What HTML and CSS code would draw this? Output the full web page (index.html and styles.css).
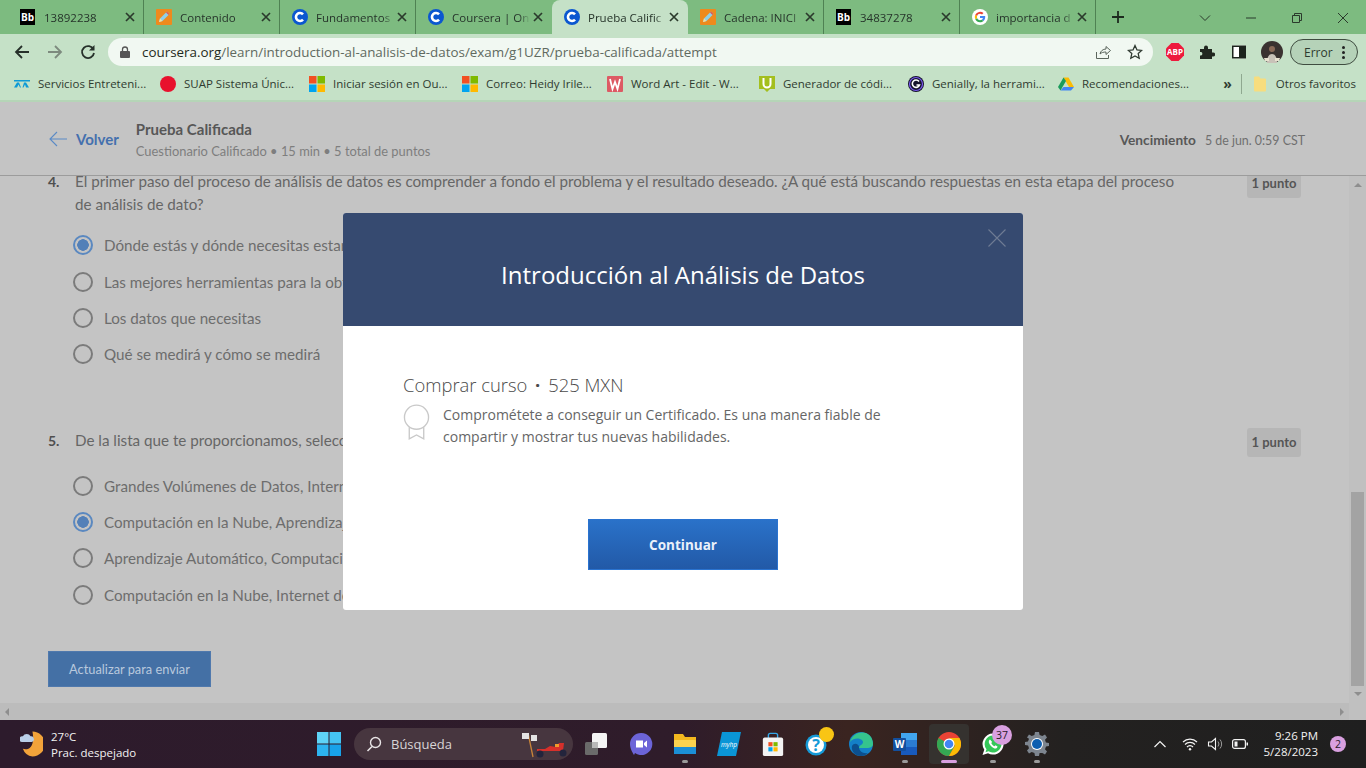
FILE: index.html
```html
<!DOCTYPE html>
<html lang="es">
<head>
  <meta charset="UTF-8" />
  <title>Prueba Calificada | Coursera</title>
  <link rel="stylesheet" href="styles.css">
</head>
<body>

  <svg class="sprite" width="0" height="0">
    <symbol id="i-coursera" viewBox="0 0 16 16">
      <circle cx="8" cy="8" r="8" fill="#0b57d0"/>
      <path d="M11 5.400A4 4 0 1 0 11 10.600" fill="none" stroke="#fff" stroke-width="2.600"/>
    </symbol>
    <symbol id="i-pencil" viewBox="0 0 16 16">
      <rect width="16" height="16" rx="1" fill="#ee8a1d"/>
      <path d="M3 13l1-3.500 7-7 2.500 2.500-7 7z" fill="#8fd0e8"/>
      <path d="M3 13l1-3.500 2.500 2.500z" fill="#f7e0a0"/>
      <path d="M10 3.500l2.500 2.500 1-1L11 2.500z" fill="#e2574c"/>
    </symbol>
    <symbol id="i-ms" viewBox="0 0 16 16">
      <rect width="7.500" height="7.500" fill="#f25022"/>
      <rect x="8.500" width="7.500" height="7.500" fill="#7fba00"/>
      <rect y="8.500" width="7.500" height="7.500" fill="#00a4ef"/>
      <rect x="8.500" y="8.500" width="7.500" height="7.500" fill="#ffb900"/>
    </symbol>
    <symbol id="i-close" viewBox="0 0 10 10">
      <path d="M1 1l8 8M9 1l-8 8" fill="none" stroke="#2b3a2c" stroke-width="1.700"/>
    </symbol>
    <symbol id="i-google" viewBox="0 0 16 16">
      <circle cx="8" cy="8" r="8" fill="#fff"/>
      <path d="M13.200 8.100c0-.4 0-.8-.1-1.100H8v2.100h2.900a2.500 2.500 0 0 1-1.100 1.600l1.700 1.300c1-.9 1.700-2.300 1.700-3.900z" fill="#4285f4"/>
      <path d="M8 13.300c1.400 0 2.600-.5 3.500-1.300l-1.700-1.300c-.5.300-1.100.5-1.800.5-1.400 0-2.500-.9-2.900-2.200L3.300 10.300A5.300 5.300 0 0 0 8 13.300z" fill="#34a853"/>
      <path d="M5.100 9a3.200 3.200 0 0 1 0-2L3.300 5.700a5.300 5.300 0 0 0 0 4.600z" fill="#fbbc05"/>
      <path d="M8 4.800c.8 0 1.500.3 2 .8l1.500-1.500A5.300 5.300 0 0 0 3.300 5.700L5.100 7C5.500 5.700 6.600 4.800 8 4.800z" fill="#ea4335"/>
    </symbol>
  </svg>

  <!-- tab strip -->
  <div class="tabstrip">
    <div class="tab"><span class="fav-bb">Bb</span><span class="tab-title">13892238</span><svg class="tab-x"><use href="#i-close"/></svg></div>
    <div class="tab"><svg class="fav"><use href="#i-pencil"/></svg><span class="tab-title">Contenido</span><svg class="tab-x"><use href="#i-close"/></svg></div>
    <div class="tab"><svg class="fav"><use href="#i-coursera"/></svg><span class="tab-title">Fundamentos</span><svg class="tab-x"><use href="#i-close"/></svg></div>
    <div class="tab no-sep"><svg class="fav"><use href="#i-coursera"/></svg><span class="tab-title">Coursera | On</span><svg class="tab-x"><use href="#i-close"/></svg></div>
    <div class="tab active no-sep"><svg class="fav"><use href="#i-coursera"/></svg><span class="tab-title">Prueba Calific</span><svg class="tab-x"><use href="#i-close"/></svg></div>
    <div class="tab"><svg class="fav"><use href="#i-pencil"/></svg><span class="tab-title">Cadena: INICI</span><svg class="tab-x"><use href="#i-close"/></svg></div>
    <div class="tab"><span class="fav-bb">Bb</span><span class="tab-title">34837278</span><svg class="tab-x"><use href="#i-close"/></svg></div>
    <div class="tab"><svg class="fav"><use href="#i-google"/></svg><span class="tab-title">importancia d</span><svg class="tab-x"><use href="#i-close"/></svg></div>
    <svg class="new-tab" viewBox="0 0 14 14"><path d="M7 1v12M1 7h12" stroke="#1d2a1e" stroke-width="1.800"/></svg>
    <div class="win-controls">
      <svg viewBox="0 0 12 12"><path d="M1 3.500l5 5 5-5" fill="none" stroke="#2b3a2c"/></svg>
      <svg viewBox="0 0 12 12"><path d="M1 6h10" stroke="#2b3a2c"/></svg>
      <svg viewBox="0 0 12 12"><path d="M1.500 3.500h7v7h-7zM3.500 3.500v-2h7v7h-2" fill="none" stroke="#2b3a2c"/></svg>
      <svg viewBox="0 0 12 12"><path d="M1 1l10 10M11 1L1 11" stroke="#2b3a2c"/></svg>
    </div>
  </div>

  <!-- address bar -->
  <div class="toolbar">
    <svg class="nav-btn" viewBox="0 0 16 16"><path d="M15 8H2M8 2L2 8l6 6" fill="none" stroke="#26302a" stroke-width="1.800"/></svg>
    <svg class="nav-btn" viewBox="0 0 16 16"><path d="M1 8h13M8 2l6 6-6 6" fill="none" stroke="#7d8a7e" stroke-width="1.800"/></svg>
    <svg class="nav-btn" viewBox="0 0 16 16"><path d="M13.500 5.500A6 6 0 1 0 14 9" fill="none" stroke="#26302a" stroke-width="1.800"/><path d="M14.500 1v5.500H9z" fill="#26302a"/></svg>
    <div class="omnibox">
      <svg class="lock" viewBox="0 0 10 12"><path d="M2.500 5V3.500a2.500 2.500 0 0 1 5 0V5" fill="none" stroke="#555" stroke-width="1.300"/><rect y="5" width="10" height="7" rx="1" fill="#555"/></svg>
      <span class="url"><b>coursera.org</b>/learn/introduction-al-analisis-de-datos/exam/g1UZR/prueba-calificada/attempt</span>
      <svg class="omni-icon" viewBox="0 0 16 16"><path d="M1.500 8v6.500h12V11M5 10c.5-3 3-5 6-5V2.500L15.500 6.500 11 10.500V8c-2.500 0-4.500.5-6 2z" fill="none" stroke="#5b655c"/></svg>
      <svg class="omni-icon" viewBox="0 0 16 16"><path d="M8 1.500l2 4.400 4.700.5-3.500 3.200 1 4.700L8 11.900 3.800 14.300l1-4.700L1.300 6.400 6 5.900z" fill="none" stroke="#2f3a31" stroke-width="1.300"/></svg>
    </div>
    <div class="ext-group">
      <span class="abp">ABP</span>
      <svg class="ext" viewBox="0 0 16 16"><path d="M1 5h4V3.500a2 2 0 0 1 4 0V5h4v3.500h1.200a2 2 0 0 1 0 4H13V15H1v-3.500h1a1.800 1.800 0 0 0 0-3.500H1z" fill="#20271f"/></svg>
      <svg class="ext" viewBox="0 0 16 16"><path d="M1 1.500h14v13H1z" fill="#fff"/><path d="M1 1.500h14v13H1zM2.500 3v10H8V3z" fill="#1c241d" fill-rule="evenodd"/></svg>
      <svg class="avatar" viewBox="0 0 22 22"><circle cx="11" cy="11" r="11" fill="#3a3230"/><path d="M6 22c0-6 2-9 5-9s5 3 5 9z" fill="#c9c2b8"/><circle cx="11" cy="8" r="3" fill="#8a6a58"/><path d="M3 17h5v3H4zM14 17h5l-1 3h-4z" fill="#e8e2d0"/></svg>
      <div class="error-chip">Error<span class="dots"><i></i><i></i><i></i></span></div>
    </div>
  </div>

  <!-- bookmarks -->
  <div class="bookmarks">
    <div class="bm"><svg class="fav" viewBox="0 0 16 16"><path d="M0 4h16v1.500H0zM3 6.500l-3 5h3l1.500-3 1.500 3h1L5 6.500zM10 6.500l2 0 3 5h-3L11 8.500 9.500 11.500h-1z" fill="#0d9ad6"/></svg><span>Servicios Entreteni...</span></div>
    <div class="bm"><svg class="fav" viewBox="0 0 16 16"><circle cx="8" cy="8" r="8" fill="#e8112d"/></svg><span>SUAP Sistema Únic...</span></div>
    <div class="bm"><svg class="fav"><use href="#i-ms"/></svg><span>Iniciar sesión en Ou...</span></div>
    <div class="bm"><svg class="fav"><use href="#i-ms"/></svg><span>Correo: Heidy Irile...</span></div>
    <div class="bm"><svg class="fav" viewBox="0 0 16 16"><rect width="16" height="16" rx="1" fill="#dd5a64"/><path d="M3 3l2.500 10L8 6l2.500 7L13 3" fill="none" stroke="#fff" stroke-width="1.800"/></svg><span>Word Art - Edit - W...</span></div>
    <div class="bm"><svg class="fav" viewBox="0 0 16 16"><path d="M0 0h16v13h-5l-3 3-3-3H0z" fill="#a4bf1e"/><path d="M4.500 2v6a3.500 3.500 0 0 0 7 0V2" fill="none" stroke="#fff" stroke-width="2"/></svg><span>Generador de códi...</span></div>
    <div class="bm"><svg class="fav" viewBox="0 0 16 16"><circle cx="8" cy="8" r="8" fill="#14122b"/><circle cx="8" cy="8" r="6.500" fill="none" stroke="#7a5af0" stroke-width="1.200"/><path d="M11 5.500A3.700 3.700 0 1 0 11.500 9H8.500" fill="none" stroke="#fff" stroke-width="1.600"/></svg><span>Genially, la herrami...</span></div>
    <div class="bm"><svg class="fav" viewBox="0 0 16 16"><path d="M5.500 1.500h5L16 11h-5z" fill="#fbbc04"/><path d="M5.500 1.500L0 11l2.500 3.500L8 5z" fill="#1a9c5b"/><path d="M2.500 14.500h10.500L16 11H5.500z" fill="#4285f4"/></svg><span>Recomendaciones...</span></div>
    <div class="bm-right">
      <span class="more">»</span>
      <span class="bm-sep"></span>
      <svg class="folder" viewBox="0 0 12 16"><path d="M0 1.500A1 1 0 0 1 1 .5h4l1.500 2H11a1 1 0 0 1 1 1V14.500a1 1 0 0 1-1 1H1a1 1 0 0 1-1-1z" fill="#f7dd7e"/></svg>
      <span>Otros favoritos</span>
    </div>
  </div>

  <!-- coursera page, already dimmed by the modal backdrop -->
  <div class="page">
    <div class="course-header">
      <div class="back">
        <svg class="back-arrow" viewBox="0 0 18 16"><path d="M18 8H1M8 1L1 8l7 7" fill="none" stroke="#5a8ac6" stroke-width="1.100"/></svg>
        <span>Volver</span>
      </div>
      <div class="course-info">
        <div class="course-title">Prueba Calificada</div>
        <div class="course-sub">Cuestionario Calificado • 15 min • 5 total de puntos</div>
      </div>
      <div class="due"><b>Vencimiento</b><span>5 de jun. 0:59 CST</span></div>
    </div>

    <div class="content-row">
      <div class="scroll-area">
        <div class="questions">
          <div class="question first">
            <div class="q-head">
              <span class="q-num">4.</span>
              <p class="q-text">El primer paso del proceso de análisis de datos es comprender a fondo el problema y el resultado deseado. ¿A qué está buscando respuestas en esta etapa del proceso<br>de análisis de dato?</p>
              <span class="badge">1 punto</span>
            </div>
            <div class="options">
              <div class="option"><span class="radio checked"></span>Dónde estás y dónde necesitas estar</div>
              <div class="option"><span class="radio"></span>Las mejores herramientas para la obtención</div>
              <div class="option"><span class="radio"></span>Los datos que necesitas</div>
              <div class="option"><span class="radio"></span>Qué se medirá y cómo se medirá</div>
            </div>
          </div>

          <div class="question second">
            <div class="q-head">
              <span class="q-num">5.</span>
              <p class="q-text">De la lista que te proporcionamos, selecciona</p>
              <span class="badge">1 punto</span>
            </div>
            <div class="options">
              <div class="option"><span class="radio"></span>Grandes Volúmenes de Datos, Internet</div>
              <div class="option"><span class="radio checked"></span>Computación en la Nube, Aprendizaje</div>
              <div class="option"><span class="radio"></span>Aprendizaje Automático, Computación</div>
              <div class="option"><span class="radio"></span>Computación en la Nube, Internet de</div>
            </div>
          </div>

          <button class="submit">Actualizar para enviar</button>
        </div>
        <div class="hscroll"><i class="arrow-left"></i><i class="arrow-right"></i></div>
      </div>
      <div class="vscroll">
        <i class="arrow-up"></i>
        <div class="thumb"></div>
        <i class="arrow-down"></i>
        <div class="corner"></div>
      </div>
    </div>

    <div class="overlay">
      <div class="modal">
        <div class="modal-head">
          <h2>Introducción al Análisis de Datos</h2>
          <svg class="modal-x" viewBox="0 0 18 18"><path d="M.5.5l17 17M17.500.5l-17 17" stroke="#6e7b93" stroke-width="1.100"/></svg>
        </div>
        <div class="modal-body">
          <h3>Comprar curso <span class="sep-dot">·</span> 525 MXN</h3>
          <div class="cert">
            <svg class="cert-icon" viewBox="0 0 28 37"><circle cx="14" cy="13.500" r="12.500" fill="#fff" stroke="#c9c9c9" stroke-width="1.400"/><path d="M6.500 24v12l7.500-4 7.500 4V24" fill="none" stroke="#c9c9c9" stroke-width="1.400"/></svg>
            <p>Comprométete a conseguir un Certificado. Es una manera fiable de compartir y mostrar tus nuevas habilidades.</p>
          </div>
          <button class="continue">Continuar</button>
        </div>
      </div>
    </div>
  </div>

  <!-- windows taskbar -->
  <div class="taskbar">
    <div class="weather">
      <svg class="weather-icon" viewBox="0 0 24 28"><path d="M13 1a13 13 0 0 1 0 26A12 12 0 0 1 3 19c6 2 13-2 10-18z" fill="#f2a33a"/><path d="M2 12a3 3 0 0 1 1-6 4.500 4.500 0 0 1 8 0 3 3 0 0 1 1 6z" fill="#b9cfe8"/></svg>
      <div class="weather-text"><div>27°C</div><div>Prac. despejado</div></div>
    </div>
    <div class="task-center">
      <svg class="task-icon win" viewBox="0 0 24 24"><rect width="11.500" height="11.500" fill="#5fd4f7"/><rect x="12.500" width="11.500" height="11.500" fill="#45c4f3"/><rect y="12.500" width="11.500" height="11.500" fill="#2db4f0"/><rect x="12.500" y="12.500" width="11.500" height="11.500" fill="#18a2ea"/></svg>
      <div class="search">
        <svg class="search-glass" viewBox="0 0 16 16"><circle cx="9.500" cy="6.500" r="5" fill="none" stroke="#e8e4e6" stroke-width="1.400"/><path d="M6 10.500L1.500 15" stroke="#e8e4e6" stroke-width="1.600"/></svg>
        <span>Búsqueda</span>
        <svg class="search-art" viewBox="0 0 50 28"><path d="M9 3l5 24" stroke="#c8843a" stroke-width="1.300"/><path d="M3 3h7v6H3zM12 5h6v6h-6z" fill="#e4e4e4"/><path d="M18 21h26l1-8-5 0-3 4-6-1-5 3h-8z" fill="#d6302b"/><circle cx="21" cy="24" r="3.500" fill="#23243c"/><circle cx="44" cy="23" r="3.500" fill="#23243c"/><rect x="36" y="14" width="4" height="3" fill="#f09a2c"/></svg>
      </div>
      <svg class="task-icon" viewBox="0 0 24 24"><rect x="0" y="10" width="13" height="13" rx="1.500" fill="#6a6a6a"/><rect x="7" y="1" width="15" height="15" rx="1.500" fill="#f4f4f4"/><rect x="7" y="10" width="6" height="6" fill="#b9b9b9"/></svg>
      <svg class="task-icon" viewBox="0 0 24 24"><path d="M12 1a11 11 0 1 1-6 20l-1 2c-1-2-4-6-4-11A11 11 0 0 1 12 1z" fill="#6c64d8"/><path d="M7 8.500h7v7H7zM15 11l3-2.500v7L15 13z" fill="#fff"/></svg>
      <div class="task-slot running">
        <svg class="task-icon" viewBox="0 0 24 24"><path d="M1 2h9l2 3h11v5H1z" fill="#f3b81f"/><rect x="1" y="8" width="22" height="14" rx="1" fill="#fbd34f"/><rect x="1" y="15" width="22" height="7" fill="#1b8fd6"/></svg>
      </div>
      <svg class="task-icon" viewBox="0 0 24 24"><path d="M5 0h19l-5 24H0z" fill="#0a95d6"/><text x="12" y="15" class="hp-text" text-anchor="middle">myhp</text></svg>
      <svg class="task-icon" viewBox="0 0 24 26"><path d="M7 7V3.500a2 2 0 0 1 2-2h6a2 2 0 0 1 2 2V7" fill="none" stroke="#35a7e8" stroke-width="1.500"/><rect x="1" y="6" width="22" height="20" rx="2" fill="#f3f3f3"/><rect x="7" y="11" width="4.500" height="4.500" fill="#f25022"/><rect x="12.500" y="11" width="4.500" height="4.500" fill="#7fba00"/><rect x="7" y="16.500" width="4.500" height="4.500" fill="#00a4ef"/><rect x="12.500" y="16.500" width="4.500" height="4.500" fill="#ffb900"/></svg>
      <div class="task-slot">
        <svg class="task-icon" viewBox="0 0 24 24"><circle cx="11" cy="13" r="10.500" fill="#159ad8"/><circle cx="11" cy="13" r="8" fill="#fff"/><text x="11" y="19" class="help-text" text-anchor="middle">?</text></svg>
        <span class="dot-yellow"></span>
      </div>
      <svg class="task-icon" viewBox="0 0 24 24"><circle cx="12" cy="12" r="12" fill="#1480c8"/><path d="M1 10C3 2 11-1 17 1c5 2 7 7 7 11 0 3-3 4-6 4H10c0-3 4-3 4-6 0-3-8-6-13 0z" fill="#35c48d"/><path d="M10 15c0 4 4 7 9 6-2 2-4 3-7 3-7 0-10-6-9-10 2-4 7-2 7 1z" fill="#0c4f8e"/></svg>
      <div class="task-slot running">
        <svg class="task-icon" viewBox="0 0 24 24"><rect x="8" y="1" width="16" height="22" rx="1" fill="#2b7cd3"/><rect x="8" y="1" width="16" height="7" fill="#41a5ee"/><rect x="8" y="15" width="16" height="8" fill="#185abd"/><rect y="6" width="13" height="13" rx="1" fill="#124f9e"/><text x="6.500" y="16" class="word-text" text-anchor="middle">W</text></svg>
      </div>
      <div class="task-slot chrome-slot">
        <svg class="task-icon" viewBox="0 0 24 24"><circle cx="12" cy="12" r="12" fill="#ea4335"/><path d="M12 12L1.600 6A12 12 0 0 0 12 24l6-10.500z" fill="#34a853"/><path d="M12 6h10.400A12 12 0 0 1 12 24l6-10.500z" fill="#fbbc05"/><circle cx="12" cy="12" r="5.500" fill="#fff"/><circle cx="12" cy="12" r="4.300" fill="#4285f4"/></svg>
      </div>
      <div class="task-slot running">
        <svg class="task-icon" viewBox="0 0 24 24"><path d="M12 1.500a10.500 10.500 0 1 1-5 19.700L1.500 23l1.800-5.300A10.500 10.500 0 0 1 12 1.500z" fill="#fff"/><path d="M12 3.500a8.500 8.500 0 1 1-4.500 15.700l-3 1 1-3A8.500 8.500 0 0 1 12 3.500z" fill="#35c759"/><path d="M9 7.500c-1 .5-1.500 2-1 3.500 1 2.500 3 4.500 5.500 5.500 1.500.3 3-.5 3-2l-2-1.200-1 1c-1.500-.6-2.500-1.700-3.300-3.200l1-1z" fill="#fff"/></svg>
        <span class="count">37</span>
      </div>
      <div class="task-slot running">
        <svg class="task-icon" viewBox="0 0 24 24"><path d="M10 0h4l.6 3 2.700 1.100L20 2.500 22 5.500l-2 2.200.9 2.800L24 11v3l-3 .6-1 2.700 2 2.200-2 3-2.700-1.600L14.600 21 14 24h-4l-.6-3-2.700-1.100L4 21.500 2 18.500l2-2.200-.9-2.800L0 13v-3l3-.6 1-2.700L2 5.500 4 2.500l2.700 1.600L9.400 3z" fill="#7d858f"/><circle cx="12" cy="12" r="6" fill="#fff"/><circle cx="12" cy="12" r="5" fill="#0e5fb0"/></svg>
      </div>
    </div>
    <div class="tray">
      <svg class="tray-icon" viewBox="0 0 14 14"><path d="M1.500 10L7 4.500 12.500 10" fill="none" stroke="#f2f2f2" stroke-width="1.200"/></svg>
      <svg class="tray-icon" viewBox="0 0 16 14"><path d="M1 5a10 10 0 0 1 14 0M3 7.500a7 7 0 0 1 10 0M5 10a4 4 0 0 1 6 0" fill="none" stroke="#f2f2f2" stroke-width="1.200"/><circle cx="8" cy="12.300" r="1.200" fill="#f2f2f2"/></svg>
      <svg class="tray-icon" viewBox="0 0 16 14"><path d="M1.500 5h3L8.500 1.500v11L4.500 9h-3z" fill="none" stroke="#f2f2f2" stroke-width="1.100"/><path d="M11 4.500a4 4 0 0 1 0 5M13 2.500a7 7 0 0 1 0 9" fill="none" stroke="#9b9b9b"/></svg>
      <svg class="tray-icon" viewBox="0 0 16 14"><rect x=".6" y="2.600" width="12.800" height="8.800" rx="2" fill="none" stroke="#f2f2f2" stroke-width="1.200"/><rect x="2.500" y="4.500" width="3" height="5" fill="#f2f2f2"/><rect x="14.500" y="5.500" width="1.500" height="3" fill="#f2f2f2"/></svg>
      <div class="clock"><div>9:26 PM</div><div>5/28/2023</div></div>
      <span class="notif">2</span>
    </div>
  </div>

</body>
</html>
```

FILE: styles.css
```css
* {
  box-sizing: border-box;
}

html,
body {
  height: 100%;
}

body {
  margin: 0;
  width: 1366px;
  height: 768px;
  overflow: hidden;
  display: flex;
  flex-direction: column;
  font-family: 'Open Sans', sans-serif;
  background: #c4c4c4;
}

.sprite {
  position: absolute;
}

/* browser chrome */
.tabstrip {
  height: 34px;
  padding-left: 8px;
  display: flex;
  background: #7dbb80;
}

.tab {
  width: 136px;
  height: 34px;
  padding-left: 12px;
  display: flex;
  align-items: center;
  border-right: 1px solid #4f8253;
  font-size: 11.5px;
  color: #26342a;
}

.tab.no-sep {
  border-right-color: transparent;
}

.tab.active {
  background: #c5e1c7;
  border-radius: 8px 8px 0 0;
}

.tab-title {
  width: 78px;
  margin-left: 8px;
  overflow: hidden;
  white-space: nowrap;
  -webkit-mask-image: linear-gradient(to right, #000 86%, transparent);
  mask-image: linear-gradient(to right, #000 86%, transparent);
}

.tab-x {
  width: 10px;
  height: 10px;
  margin-left: 3px;
}

.fav {
  width: 16px;
  height: 16px;
  flex: none;
}

.fav-bb {
  width: 15px;
  height: 16px;
  flex: none;
  margin-right: 1px;
  background: #000;
  color: #fff;
  font-size: 10px;
  font-weight: 700;
  line-height: 16px;
  text-align: center;
}

.new-tab {
  width: 14px;
  height: 14px;
  margin: 10px 0 0 15px;
}

.win-controls {
  margin-left: auto;
  width: 184px;
  display: flex;
  justify-content: space-between;
  padding: 12px 17px 0 17px;
}

.win-controls svg {
  width: 12px;
  height: 12px;
}

.toolbar {
  height: 33px;
  padding: 4px 0 1px 14px;
  display: flex;
  align-items: center;
  background: #c5e1c7;
}

.nav-btn {
  width: 16px;
  height: 16px;
  margin-right: 17px;
}

.omnibox {
  width: 1045px;
  height: 28px;
  margin-left: -5px;
  padding: 0 10px 0 12px;
  display: flex;
  align-items: center;
  border-radius: 14px;
  background: #f1f8f2;
  font-size: 13.4px;
  color: #5f6a60;
}

.omnibox b {
  font-weight: 400;
  color: #1f2a20;
}

.lock {
  width: 10px;
  height: 12px;
  margin-right: 12px;
}

.url {
  white-space: nowrap;
}

.omni-icon {
  width: 16px;
  height: 16px;
  margin-left: 16px;
}

.url + .omni-icon {
  margin-left: auto;
}

.ext-group {
  display: flex;
  align-items: center;
  margin-left: 13px;
}

.abp {
  width: 18px;
  height: 18px;
  margin-right: 15px;
  clip-path: polygon(30% 0, 70% 0, 100% 30%, 100% 70%, 70% 100%, 30% 100%, 0 70%, 0 30%);
  background: #ee1a3d;
  color: #fff;
  font-size: 8px;
  font-weight: 700;
  line-height: 18px;
  text-align: center;
}

.ext {
  width: 16px;
  height: 16px;
  margin-right: 16px;
}

.avatar {
  width: 22px;
  height: 22px;
  margin-left: -2px;
  margin-right: 7px;
}

.error-chip {
  width: 68px;
  height: 26px;
  padding-left: 13px;
  display: flex;
  align-items: center;
  border: 1px solid #3f4c40;
  border-radius: 13px;
  background: #b5d2b8;
  font-size: 12px;
  color: #2d3a2e;
}

.dots {
  margin-left: 9px;
  display: flex;
  flex-direction: column;
  gap: 2px;
}

.dots i {
  width: 3px;
  height: 3px;
  border-radius: 50%;
  background: #222;
}

.bookmarks {
  height: 35px;
  padding: 0 0 0 14px;
  display: flex;
  align-items: center;
  background: #c5e1c7;
  border-bottom: 2px solid #b5d5b7;
  font-size: 11.5px;
  color: #2f3b30;
}

.bm {
  width: 149px;
  display: flex;
  align-items: center;
  gap: 8px;
  white-space: nowrap;
}

.bm:nth-child(1) { width: 146px; }
.bm:nth-child(3) { width: 153px; }
.bm:nth-child(4) { width: 145px; }
.bm:nth-child(5) { width: 152px; }
.bm:nth-child(7) { width: 150px; }

.bm-right {
  margin-left: auto;
  padding-right: 10px;
  display: flex;
  align-items: center;
}

.more {
  font-size: 14px;
  font-weight: 700;
}

.bm-sep {
  width: 1px;
  height: 20px;
  margin: 0 12px 0 9px;
  background: #8fa890;
}

.folder {
  width: 12px;
  height: 16px;
  margin-right: 10px;
}

/* page */
.page {
  position: relative;
  flex: 1;
  min-height: 0;
  display: flex;
  flex-direction: column;
  font-family: Lato, sans-serif;
  color: #5e5e5e;
  background: #c4c4c4;
}

.course-header {
  height: 74px;
  padding: 0 61px 0 49px;
  display: flex;
  align-items: center;
  border-bottom: 1px solid #9c9c9c;
}

.back {
  display: flex;
  align-items: center;
  gap: 9px;
  font-size: 15px;
  font-weight: 700;
  color: #4470ae;
}

.back-arrow {
  width: 18px;
  height: 16px;
}

.course-info {
  margin: 2px 0 0 17px;
}

.course-title {
  font-size: 15px;
  font-weight: 700;
  line-height: 22px;
  color: #575757;
}

.course-sub {
  font-size: 12.9px;
  line-height: 22px;
  color: #7e7e7e;
}

.due {
  margin: 2px 0 0 auto;
  font-size: 12.4px;
}

.due b {
  margin-right: 9px;
  font-size: 13.7px;
  color: #585858;
}

.due span {
  color: #6f6f6f;
}

.content-row {
  flex: 1;
  min-height: 0;
  display: flex;
}

.scroll-area {
  flex: 1;
  display: flex;
  flex-direction: column;
}

.questions {
  flex: 1;
  min-height: 0;
  overflow: hidden;
  padding: 0 48px;
}

.question.first {
  margin-top: -6px;
}

.question.second {
  margin-top: 57px;
}

.q-head {
  display: flex;
  align-items: flex-start;
}

.q-num {
  width: 27px;
  font-size: 14px;
  font-weight: 700;
  line-height: 23px;
  color: #4f4f4f;
}

.q-text {
  margin: 0;
  font-size: 15.2px;
  line-height: 23px;
  color: #666;
}

.badge {
  margin: -1px 0 0 auto;
  height: 29px;
  width: 54px;
  border-radius: 3px;
  background: #b6b6b6;
  font-size: 13px;
  font-weight: 700;
  line-height: 29px;
  text-align: center;
  color: #555;
}

.options {
  margin: 11.3px 0 0 25px;
}

.second .options {
  margin-top: 10.2px;
}

.option {
  height: 36.3px;
  display: flex;
  align-items: center;
  gap: 11px;
  font-size: 15.2px;
  color: #6d6d6d;
  white-space: nowrap;
}

.radio {
  width: 20px;
  height: 20px;
  flex: none;
  border: 2px solid #7b7b7b;
  border-radius: 50%;
}

.radio.checked {
  border-color: #5a88c0;
  background: radial-gradient(circle, #5380b8 0, #5380b8 5.5px, transparent 6px);
}

.submit {
  display: block;
  width: 163px;
  height: 36px;
  margin-top: 38px;
  padding: 0;
  border: 1px solid #5079ad;
  background: #4470a5;
  font-family: inherit;
  font-size: 12.8px;
  color: #b9c9dd;
}

.hscroll {
  height: 17px;
  padding: 0 5px;
  display: flex;
  align-items: center;
  justify-content: space-between;
  background: #bcbcbc;
}

.vscroll {
  width: 17px;
  display: flex;
  flex-direction: column;
  align-items: center;
  background: #c0c0c0;
}

.arrow-up,
.arrow-down {
  flex: none;
  width: 0;
  height: 0;
  border-left: 4px solid transparent;
  border-right: 4px solid transparent;
}

.arrow-up {
  margin-top: 7px;
  border-bottom: 4px solid #8e8e8e;
}

.arrow-down {
  margin: 6px 0 7px;
  border-top: 4px solid #8e8e8e;
}

.arrow-left,
.arrow-right {
  width: 0;
  height: 0;
  border-top: 4px solid transparent;
  border-bottom: 4px solid transparent;
}

.arrow-left {
  border-right: 4px solid #8e8e8e;
}

.arrow-right {
  border-left: 4px solid #8e8e8e;
}

.thumb {
  width: 13px;
  height: 194px;
  margin-top: auto;
  background: #a3a3a3;
}

.corner {
  height: 17px;
  flex: none;
}

/* modal */
.overlay {
  position: absolute;
  inset: 0;
  display: flex;
  align-items: center;
  justify-content: center;
}

.modal {
  width: 680px;
  height: 397px;
  border-radius: 3px;
  overflow: hidden;
  background: #fff;
  font-family: 'Open Sans', sans-serif;
}

.modal-head {
  position: relative;
  height: 113px;
  display: flex;
  align-items: center;
  justify-content: center;
  background: #364a70;
}

.modal-head h2 {
  margin: 10px 0 0;
  font-size: 24px;
  font-weight: 400;
  color: #fff;
}

.modal-x {
  position: absolute;
  top: 16px;
  right: 17px;
  width: 18px;
  height: 18px;
}

.modal-body {
  padding: 47px 60px 0;
  display: flex;
  flex-direction: column;
}

.modal-body h3 {
  margin: 0;
  font-size: 18.4px;
  font-weight: 300;
  line-height: 24px;
  color: #4a4a4a;
}

.sep-dot {
  margin: 0 3px;
  font-weight: 700;
}

.cert {
  margin-top: 7px;
  display: flex;
  gap: 13px;
}

.cert-icon {
  width: 27px;
  height: 36px;
  flex: none;
}

.cert p {
  width: 450px;
  margin: 0;
  font-size: 14px;
  line-height: 22px;
  color: #666;
}

.continue {
  width: 190px;
  height: 51px;
  margin: 71px 0 0 185px;
  padding: 2px 0 0;
  border: 1px solid #2a73d0;
  background: linear-gradient(#2a72c9, #2259a7);
  font-family: inherit;
  font-size: 13.5px;
  font-weight: 700;
  color: #eaf1fa;
}

/* taskbar */
.taskbar {
  height: 48px;
  padding-left: 20px;
  display: flex;
  align-items: center;
  background: linear-gradient(to right, #2d1b2c, #2f1c2a 50%, #3a2420 62%, #232120 78%, #1f1f1f);
  color: #f2f2f2;
}

.weather {
  width: 297px;
  display: flex;
  align-items: center;
  gap: 8px;
}

.weather-icon {
  width: 23px;
  height: 28px;
}

.weather-text {
  margin-top: 2px;
  font-size: 11.5px;
  line-height: 16px;
}

.task-center {
  display: flex;
  align-items: center;
}

.task-icon {
  width: 24px;
  height: 24px;
  margin: 0 10px;
  flex: none;
}

.task-center > .win {
  margin-left: 0;
  margin-right: 13px;
}

.search {
  width: 219px;
  height: 32px;
  margin-right: 2px;
  padding: 0 4px 0 12px;
  display: flex;
  align-items: center;
  border-radius: 16px;
  background: #47363f;
  font-size: 13px;
  color: #d9d4d6;
}

.search-glass {
  width: 16px;
  height: 16px;
  margin-right: 9px;
}

.search-art {
  width: 50px;
  height: 28px;
  margin-left: auto;
}

.hp-text {
  font-size: 6.5px;
  font-style: italic;
  fill: #fff;
}

.help-text {
  font-size: 16px;
  font-weight: 700;
  fill: #159ad8;
}

.word-text {
  font-size: 10px;
  font-weight: 700;
  fill: #fff;
}

.task-slot {
  position: relative;
  display: flex;
}

.running::after {
  content: "";
  position: absolute;
  left: 19px;
  bottom: -7px;
  width: 6px;
  height: 3px;
  border-radius: 2px;
  background: #9a9a9a;
}

.dot-yellow {
  position: absolute;
  top: -5px;
  right: 5px;
  width: 15px;
  height: 15px;
  border-radius: 50%;
  background: #f9c514;
}

.chrome-slot {
  width: 40px;
  height: 40px;
  margin: 0 2px;
  align-items: center;
  justify-content: center;
  border-radius: 4px;
  background: #35322f;
}

.chrome-slot::after {
  content: "";
  position: absolute;
  left: 12px;
  bottom: 1px;
  width: 16px;
  height: 3px;
  border-radius: 2px;
  background: #d9a0e0;
}

.count {
  position: absolute;
  top: -7px;
  right: 3px;
  width: 20px;
  height: 20px;
  border-radius: 50%;
  background: #d9a0e0;
  font-size: 10.5px;
  line-height: 20px;
  text-align: center;
  color: #2a1a2a;
}

.tray {
  margin-left: auto;
  padding-right: 20px;
  display: flex;
  align-items: center;
}

.tray-icon {
  width: 16px;
  height: 14px;
  margin-left: 9px;
}

.tray-icon:first-child {
  margin-right: 5px;
}

.clock {
  margin-left: 16px;
  font-size: 11.5px;
  line-height: 16px;
  text-align: right;
}

.notif {
  width: 16px;
  height: 16px;
  margin-left: 12px;
  border-radius: 50%;
  background: #d9a0e0;
  font-size: 10.5px;
  line-height: 16px;
  text-align: center;
  color: #2a1a2a;
}
```
